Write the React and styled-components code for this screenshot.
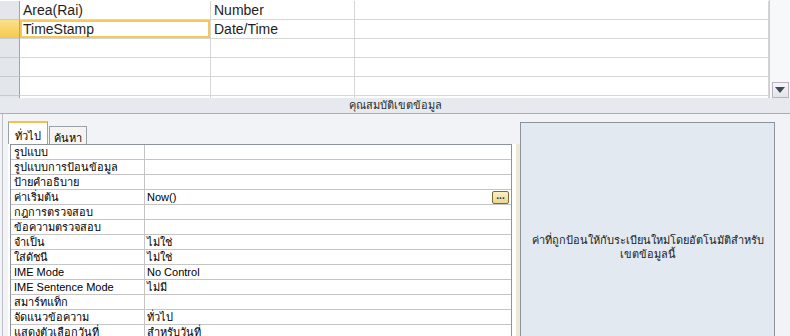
import React from 'react'
import styled, { createGlobalStyle } from 'styled-components'

// ตารางออกแบบเขตข้อมูล + คุณสมบัติด้านล่าง
const fields = [
    { name: 'Area(Rai)', type: 'Number' },
    { name: 'TimeStamp', type: 'Date/Time', selected: true },
    { name: '', type: '' },
    { name: '', type: '' },
    { name: '', type: '' },
    { name: '', type: '' },
]

const props = [
    { label: 'รูปแบบ', value: '' },
    { label: 'รูปแบบการป้อนข้อมูล', value: '' },
    { label: 'ป้ายคำอธิบาย', value: '' },
    { label: 'ค่าเริ่มต้น', value: 'Now()', builder: true },
    { label: 'กฎการตรวจสอบ', value: '' },
    { label: 'ข้อความตรวจสอบ', value: '' },
    { label: 'จำเป็น', value: 'ไม่ใช่' },
    { label: 'ใส่ดัชนี', value: 'ไม่ใช่' },
    { label: 'IME Mode', value: 'No Control' },
    { label: 'IME Sentence Mode', value: 'ไม่มี' },
    { label: 'สมาร์ทแท็ก', value: '' },
    { label: 'จัดแนวข้อความ', value: 'ทั่วไป' },
    { label: 'แสดงตัวเลือกวันที่', value: 'สำหรับวันที่' },
]

function App() {
    return (
        <>
            <GlobalStyle />
            <Window>
                <TableArea>
                    <Grid>
                        {fields.map((f, i) => (
                            <GridRow key={i}>
                                <Selector $active={f.selected} />
                                <Cell $selected={f.selected}>{f.name}</Cell>
                                <Cell>{f.type}</Cell>
                                <Cell />
                            </GridRow>
                        ))}
                    </Grid>
                    <ScrollBar>
                        <ArrowButton>
                            <svg width="10" height="6" viewBox="0 0 10 6">
                                <path d="M0 0 L10 0 L5 6 Z" fill="#3d4a5c" />
                            </svg>
                        </ArrowButton>
                    </ScrollBar>
                </TableArea>

                <SectionBar>คุณสมบัติเขตข้อมูล</SectionBar>

                <Lower>
                    <TabPanel>
                        <Tabs>
                            <Tab $active>ทั่วไป</Tab>
                            <Tab>ค้นหา</Tab>
                        </Tabs>
                        <TabBody>
                            <PropGrid>
                                {props.map((p, i) => (
                                    <PropRow key={i}>
                                        <PropLabel>{p.label}</PropLabel>
                                        <PropValue>
                                            <span>{p.value}</span>
                                            {p.builder && <BuilderButton>...</BuilderButton>}
                                        </PropValue>
                                    </PropRow>
                                ))}
                            </PropGrid>
                        </TabBody>
                    </TabPanel>
                    <DescPanel>
                        ค่าที่ถูกป้อนให้กับระเบียนใหม่โดยอัตโนมัติสำหรับ<br />เขตข้อมูลนี้
                    </DescPanel>
                </Lower>
            </Window>
        </>
    )
}

export default App

const GlobalStyle = createGlobalStyle`
    body {
        margin: 0;
        font-family: "Liberation Sans", "DejaVu Sans", "Noto Sans", sans-serif;
        background: #f1f3f6;
    }
`

const Window = styled.div`
    width: 790px;
    height: 336px;
    overflow: hidden;
    display: flex;
    flex-direction: column;
    background: #f1f3f6;
`

const TableArea = styled.div`
    height: 98px;
    display: flex;
    background: #fff;
`

const Grid = styled.div`
    flex: 1;
    overflow: hidden;
    padding-top: 1px;
`

const GridRow = styled.div`
    display: grid;
    grid-template-columns: 20px 191px 144px 1fr;
    height: 19px;
`

const Selector = styled.div`
    border-bottom: 1px solid #c6cbd2;
    border-right: 1px solid #9ea4ab;
    background: ${p => p.$active ? 'linear-gradient(#fbe08c, #f5c94e)' : '#e3e6ea'};
`

const Cell = styled.div`
    border-bottom: 1px solid #d6d6d6;
    border-right: 1px solid #d6d6d6;
    font-size: 14px;
    color: #1e1e1e;
    padding-left: 3px;
    line-height: 18px;
    white-space: nowrap;
    box-shadow: ${p => p.$selected ? 'inset 0 0 0 2px #f5c85c' : 'none'};
`

const ScrollBar = styled.div`
    width: 20px;
    display: flex;
    flex-direction: column;
    justify-content: flex-end;
    align-items: center;
    background: #f7f8f9;
    border-left: 1px solid #c9ccd0;
`

const ArrowButton = styled.div`
    width: 17px;
    height: 16px;
    box-sizing: border-box;
    border: 1px solid #b9b2c4;
    background: linear-gradient(#f6f6f8, #e2e4e8);
    display: flex;
    align-items: center;
    justify-content: center;
`

const SectionBar = styled.div`
    height: 15px;
    background: #e6eaef;
    border-bottom: 1px solid #a9afb7;
    font-size: 11px;
    line-height: 15px;
    text-align: center;
    color: #2a2a2a;
`

const Lower = styled.div`
    flex: 1;
    display: flex;
    align-items: flex-start;
    padding: 7px 0 0 5px;
    margin-left: 2px;
    border-left: 1px solid #bcc0c6;
`

const TabPanel = styled.div`
    width: 512px;
    display: flex;
    flex-direction: column;
`

const Tabs = styled.div`
    display: flex;
    align-items: flex-end;
    height: 23px;
`

const Tab = styled.div`
    font-size: 11px;
    color: #000;
    box-sizing: border-box;
    border: 1px solid #9aa0a7;
    border-bottom: none;
    background: ${p => p.$active ? '#fff' : '#f4f4f2'};
    border-top: ${p => p.$active ? '2px solid #f4c24a' : '1px solid #9aa0a7'};
    height: ${p => p.$active ? '23px' : '18px'};
    padding: ${p => p.$active ? '4px 6px 0' : '2px 4px 0'};
    margin-right: 1px;
`

const TabBody = styled.div`
    background: #fff;
    padding-right: 4px;
    border-right: 4px solid #ece9d8;
    height: 200px;
`

const PropGrid = styled.div`
    border: 1px solid #8e9399;
    border-bottom: none;
    margin-left: 2px;
`

const PropRow = styled.div`
    display: grid;
    grid-template-columns: 134px 1fr;
    height: 15px;
    box-sizing: border-box;
    border-bottom: 1px solid #c4c4c4;
    font-size: 11px;
    line-height: 14px;
    color: #000;
`

const PropLabel = styled.div`
    border-right: 1px solid #c4c4c4;
    padding-left: 3px;
    white-space: nowrap;
`

const PropValue = styled.div`
    display: flex;
    justify-content: space-between;
    align-items: center;
    padding: 0 2px;
    white-space: nowrap;
`

const BuilderButton = styled.div`
    width: 17px;
    height: 13px;
    box-sizing: border-box;
    border: 1px solid #7a6a3a;
    border-radius: 2px;
    background: linear-gradient(#fbf1c4, #eed58c);
    color: #1b2a5a;
    font-size: 10px;
    font-weight: bold;
    line-height: 8px;
    text-align: center;
`

const DescPanel = styled.div`
    width: 255px;
    height: 250px;
    margin-top: 1px;
    box-sizing: border-box;
    border: 1px solid #8d939a;
    background: #e3e9f0;
    display: flex;
    align-items: center;
    justify-content: center;
    text-align: center;
    font-size: 11px;
    line-height: 14px;
    color: #1a1a1a;
    padding: 0 8px;
`
